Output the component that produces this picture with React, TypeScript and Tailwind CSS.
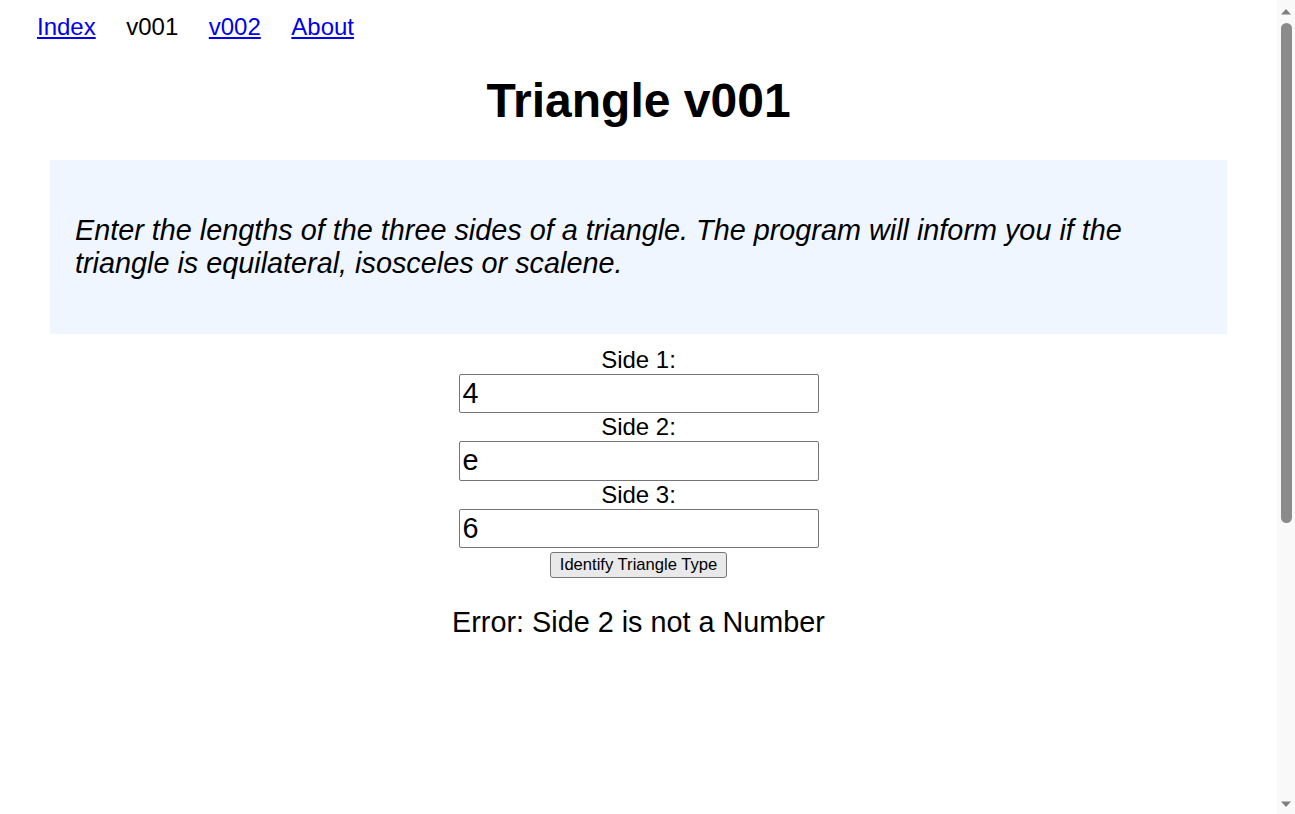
import React from "react";

function FakeScrollbar() {
  return (
    <div className="flex h-full w-[18px] shrink-0 flex-col items-center bg-[#f9f9f9]">
      <div className="flex h-[17px] w-full shrink-0 items-end justify-center pb-[2px]">
        <svg width="12" height="7" viewBox="0 0 12 7">
          <polygon points="1,6.5 11,6.5 6,1" fill="#7f7f7f" />
        </svg>
      </div>
      <div className="mt-[6px] h-[500px] w-[11px] shrink-0 rounded-full bg-[#8b8b8b]" />
      <div className="flex-1" />
      <div className="flex h-[17px] w-full shrink-0 items-start justify-center pt-[4px]">
        <svg width="12" height="7" viewBox="0 0 12 7">
          <polygon points="1,0.5 11,0.5 6,6" fill="#7f7f7f" />
        </svg>
      </div>
    </div>
  );
}

export default function App() {
  const font = { fontFamily: '"Liberation Sans", Arial, sans-serif' };
  return (
    <div className="flex h-[814px] overflow-hidden bg-white text-black" style={font}>
      <main className="min-w-0 flex-1">
        <nav className="flex gap-[30.5px] pl-[37px] pt-[13px] text-[24px] leading-[27.6px]">
          <a href="#" className="text-[#0000ee] underline">Index</a>
          <span>v001</span>
          <a href="#" className="text-[#0000ee] underline">v002</a>
          <a href="#" className="text-[#0000ee] underline">About</a>
        </nav>
        <h1 className="mt-[32px] text-center text-[48px] font-bold leading-[55px]">Triangle v001</h1>
        <div className="mx-[50px] mt-[32px] bg-[#eff6ff] px-[25px] py-[54px]">
          <p className="text-[28.8px] italic leading-[33px]">
            Enter the lengths of the three sides of a triangle. The program will inform you if the triangle is
            equilateral, isosceles or scalene.
          </p>
        </div>
        <div className="mt-[12px] flex flex-col items-center">
          {[
            ["Side 1:", "4"],
            ["Side 2:", "e"],
            ["Side 3:", "6"],
          ].map(([label, value]) => (
            <div key={label} className="flex flex-col items-center">
              <label className="text-[24px] leading-[28px]">{label}</label>
              <input
                defaultValue={value}
                className="h-[39.5px] w-[360px] rounded-[2px] border border-[#767676] px-[3px] text-[28.8px] leading-[33px] outline-none"
                style={font}
              />
            </div>
          ))}
          <button
            className="mt-[4px] h-[26px] rounded-[3px] border border-[#767676] bg-[#e9e9e9] px-[9px] text-[16.6px] leading-[18px]"
            style={font}
          >
            Identify Triangle Type
          </button>
          <p className="mt-[28px] text-[28.8px] leading-[33px]">Error: Side 2 is not a Number</p>
        </div>
      </main>
      <FakeScrollbar />
    </div>
  );
}
